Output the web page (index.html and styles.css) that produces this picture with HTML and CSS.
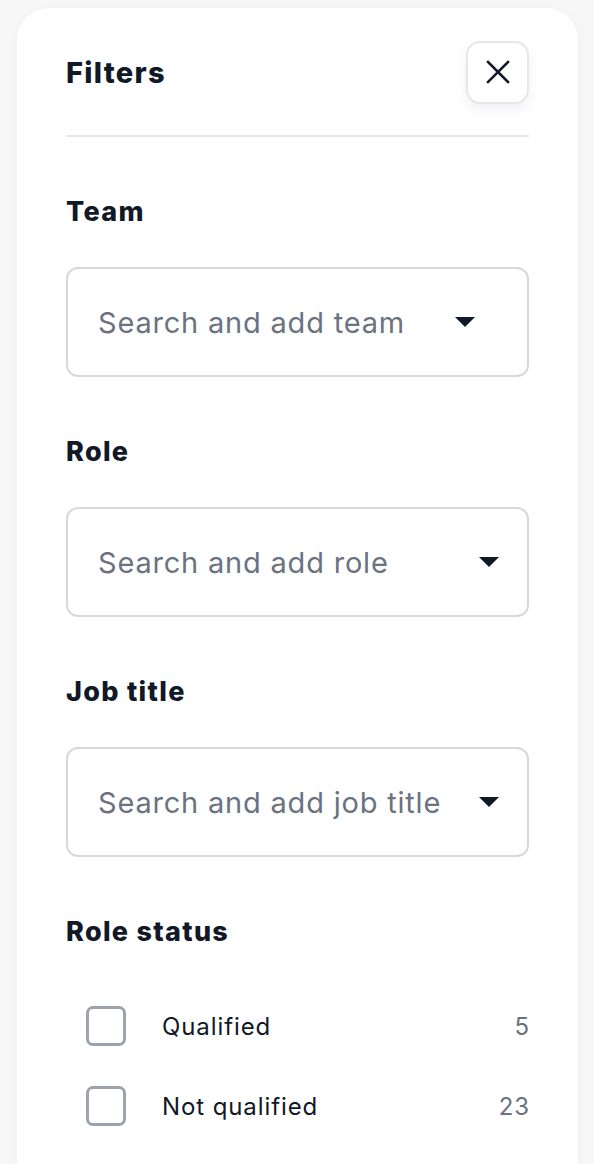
FILE: index.html
```html
<!DOCTYPE html>
<html lang="en">
<head>
<meta charset="utf-8">
<title>Filters</title>
<link rel="stylesheet" href="styles.css">
</head>
<body>
<aside class="panel">
  <header class="panel-header">
    <h1 class="panel-title">Filters</h1>
    <button class="close-btn" type="button" aria-label="Close">
      <svg width="24" height="24" viewBox="0 0 24 24" fill="none" stroke="#111827" stroke-width="2.5" stroke-linecap="square"><path d="M2 2L22 22M22 2L2 22"/></svg>
    </button>
  </header>
  <hr class="divider">

  <section class="field">
    <h2 class="field-label">Team</h2>
    <div class="select">
      <span class="select-text">Search and add team</span>
      <span class="caret caret-near"></span>
    </div>
  </section>

  <section class="field">
    <h2 class="field-label">Role</h2>
    <div class="select">
      <span class="select-text">Search and add role</span>
      <span class="caret"></span>
    </div>
  </section>

  <section class="field">
    <h2 class="field-label">Job title</h2>
    <div class="select">
      <span class="select-text">Search and add job title</span>
      <span class="caret"></span>
    </div>
  </section>

  <section class="field">
    <h2 class="field-label">Role status</h2>
    <ul class="options">
      <li class="option"><span class="checkbox"></span><span class="option-label">Qualified</span><span class="option-count">5</span></li>
      <li class="option"><span class="checkbox"></span><span class="option-label">Not qualified</span><span class="option-count">23</span></li>
    </ul>
  </section>
</aside>
</body>
</html>
```
FILE: styles.css
```css
* { box-sizing: border-box; }
html, body { margin: 0; padding: 0; }
body {
  background: #f7f7f7;
  font-family: "Inter", "Liberation Sans", sans-serif;
  color: #111827;
  height: 1164px;
  overflow: hidden;
}
.panel {
  margin: 8px 16px 0 17px;
  background: #fff;
  border-radius: 32px 32px 0 0;
  padding: 33px 49px 40px 49px;
  min-height: 1200px;
  box-shadow: 0 0 12px rgba(0,0,0,0.03);
}
.panel-header {
  display: flex;
  align-items: center;
  justify-content: space-between;
  height: 62px;
}
.panel-title {
  margin: 0;
  font-size: 29px;
  font-weight: 800;
  letter-spacing: 1.3px;
  color: #111827;
}
.close-btn {
  width: 63px;
  height: 63px;
  border: 2px solid #e6e7ec;
  border-radius: 14px;
  background: #fff;
  display: flex;
  align-items: center;
  justify-content: center;
  box-shadow: 0 6px 14px rgba(17,24,39,0.06);
  padding: 0;
}
.divider {
  margin: 32px 0 0 0;
  border: 0;
  height: 2px;
  background: #e5e7eb;
}
.field { margin-top: 59px; }
.field-label {
  margin: 0;
  font-size: 27px;
  line-height: 32px;
  font-weight: 800;
  letter-spacing: 1.3px;
  color: #111827;
}
.select {
  margin-top: 39px;
  height: 110px;
  border: 2px solid #d6d8dd;
  border-radius: 12px;
  display: flex;
  align-items: center;
  padding: 0 28px 0 30px;
}
.select-text {
  flex: 1;
  font-size: 29px;
  letter-spacing: 0.8px;
  color: #6b7280;
}
.caret {
  width: 0;
  height: 0;
  border-left: 10px solid transparent;
  border-right: 10px solid transparent;
  border-top: 10px solid #111827;
}
.caret-near { margin-right: 24px; }
.options {
  list-style: none;
  margin: 38px 0 0 0;
  padding: 0 0 0 20px;
}
.option {
  display: flex;
  align-items: center;
  height: 80px;
}
.checkbox {
  width: 40px;
  height: 40px;
  border: 3px solid #9ca3af;
  border-radius: 7px;
  flex: none;
}
.option-label {
  flex: 1;
  margin-left: 36px;
  font-size: 24px;
  letter-spacing: 0.9px;
  color: #111827;
}
.option-count {
  font-size: 24px;
  letter-spacing: 0.9px;
  margin-right: -1px;
  color: #6b7280;
}
```
